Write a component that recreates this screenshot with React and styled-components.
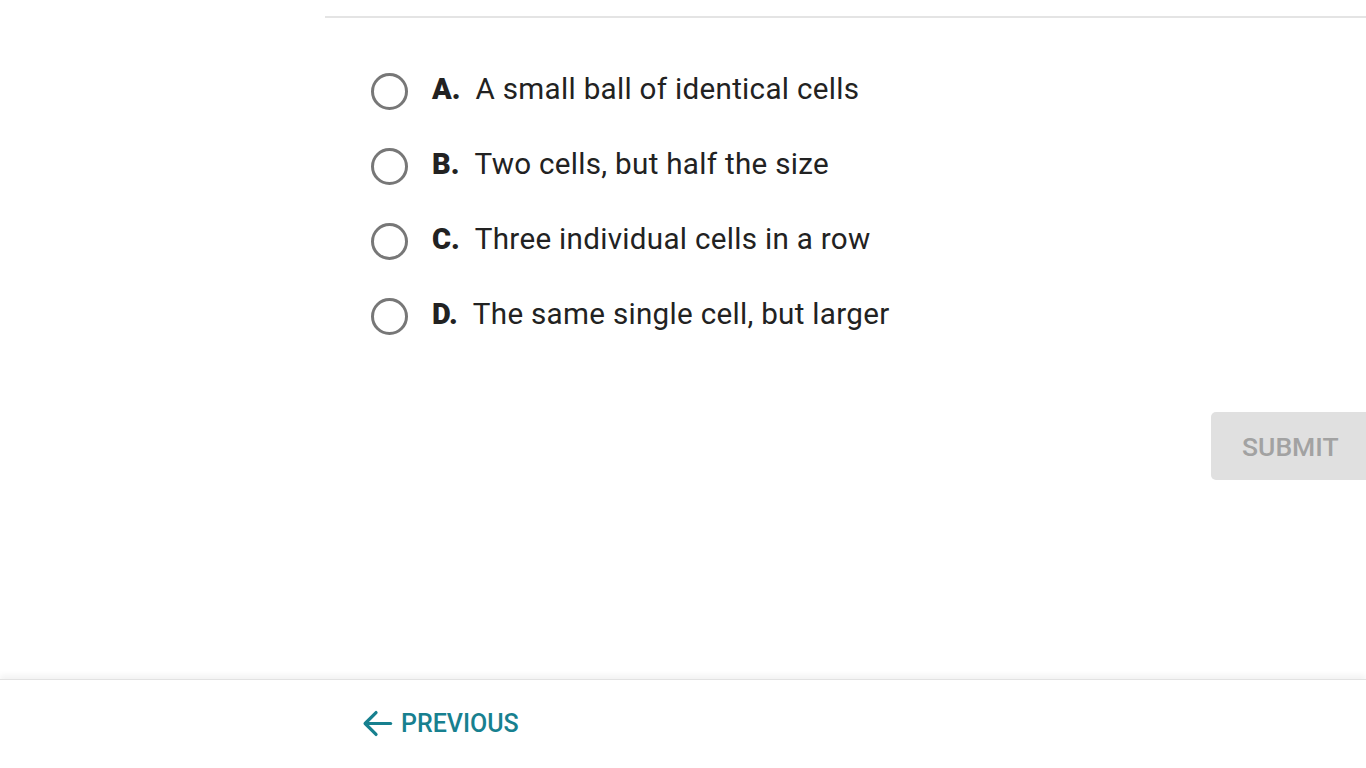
import React from 'react';
import styled, { createGlobalStyle } from 'styled-components';

const GlobalStyle = createGlobalStyle`
  html, body {
    margin: 0;
    padding: 0;
    background: #fff;
    font-family: Roboto, "Liberation Sans", sans-serif;
    overflow: hidden;
  }
`;

const choices = [
  { letter: 'A.', text: 'A small ball of identical cells' },
  { letter: 'B.', text: 'Two cells, but half the size' },
  { letter: 'C.', text: 'Three individual cells in a row' },
  { letter: 'D.', text: 'The same single cell, but larger' },
];

const App = () => {
  return (
    <>
      <GlobalStyle />
      <Page>
        <Main>
          <TopRule />
          <ChoiceList>
            {choices.map(c => (
              <Choice key={c.letter}>
                <Radio />
                <Letter>{c.letter}</Letter>
                <ChoiceText>{c.text}</ChoiceText>
              </Choice>
            ))}
          </ChoiceList>
          <Actions>
            <SubmitButton disabled>SUBMIT</SubmitButton>
          </Actions>
        </Main>
        <Footer>
          <PrevButton>
            <svg width="35" height="35" viewBox="0 0 24 24" fill="none" stroke="currentColor" strokeWidth="2.2" strokeLinecap="round" strokeLinejoin="round">
              <path d="M21 12H4" />
              <path d="M11 4.5L3.5 12l7.5 7.5" />
            </svg>
            PREVIOUS
          </PrevButton>
        </Footer>
      </Page>
    </>
  );
};

const Page = styled.div`
  width: 1366px;
  height: 768px;
  display: flex;
  flex-direction: column;
`;

const Main = styled.div`
  flex: 1;
  padding-left: 325px;
  padding-top: 16px;
`;

const TopRule = styled.div`
  height: 2px;
  background: #e4e4e4;
`;

const ChoiceList = styled.div`
  display: flex;
  flex-direction: column;
  gap: 39px;
  padding: 55px 0 0 46px;
`;

const Choice = styled.label`
  display: flex;
  align-items: center;
  height: 36px;
  color: #222;
`;

const Radio = styled.span`
  width: 31px;
  height: 31px;
  border: 3px solid #777;
  border-radius: 50%;
  margin-right: 24px;
  flex-shrink: 0;
`;

const Letter = styled.span`
  font-weight: 900;
  font-size: 29px;
  margin-right: 15px;
  margin-top: -5px;
`;

const ChoiceText = styled.span`
  font-size: 29.6px;
  letter-spacing: 0.3px;
  margin-top: -5px;
`;

const Actions = styled.div`
  display: flex;
  justify-content: flex-end;
  margin-top: 78px;
  margin-right: -5px;
`;

const SubmitButton = styled.button`
  width: 160px;
  height: 68px;
  border: none;
  border-radius: 5px;
  background: #e0e0e0;
  color: #a2a2a2;
  font-family: Roboto, "Liberation Sans", sans-serif;
  font-weight: 500;
  font-size: 26.5px;
  text-align: left;
  padding-left: 31px;
`;

const Footer = styled.div`
  height: 88px;
  border-top: 1px solid #e2e2e2;
  box-shadow: 0 -4px 6px rgba(0, 0, 0, 0.05);
  display: flex;
  align-items: center;
  padding-left: 360px;
`;

const PrevButton = styled.button`
  display: flex;
  align-items: center;
  gap: 6px;
  border: none;
  background: none;
  padding: 0;
  color: #17808f;
  font-family: Roboto, "Liberation Sans", sans-serif;
  font-weight: 500;
  font-size: 25px;
  margin-top: -2px;
`;

export default App;
